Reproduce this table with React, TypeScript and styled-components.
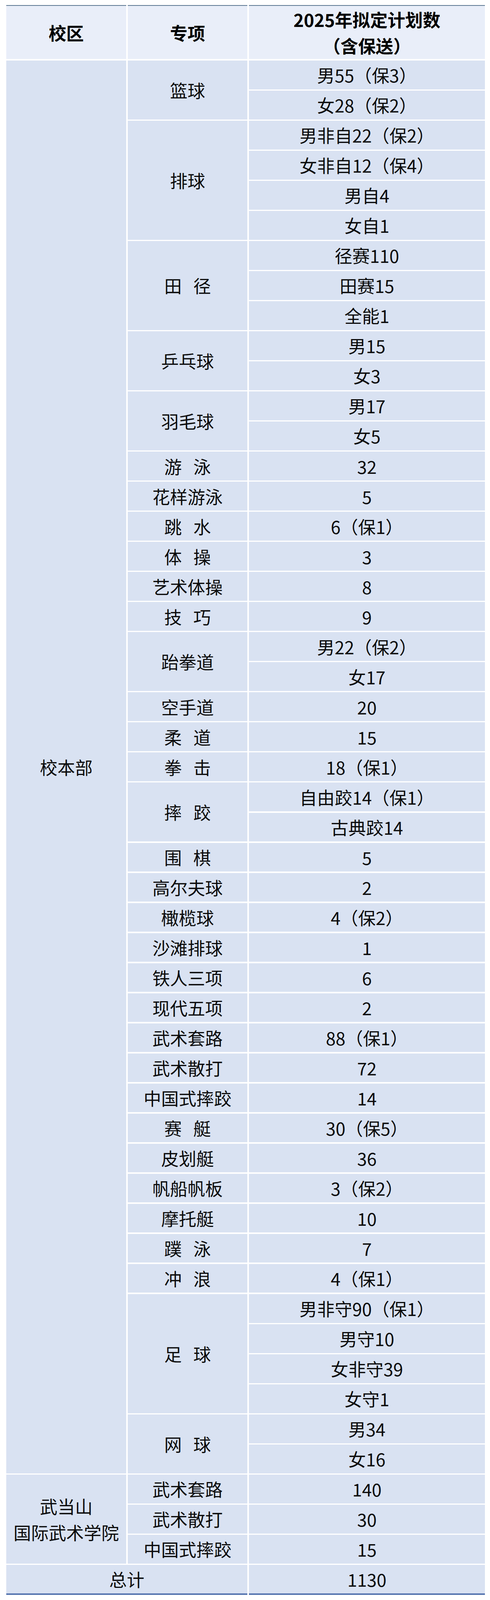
import React from "react";
import styled, { createGlobalStyle } from "styled-components";

const GlobalStyle = createGlobalStyle`
  html, body {
    margin: 0;
    padding: 0;
    background: #ffffff;
  }
  body {
    font-family: "Noto Sans CJK SC", "Noto Sans", sans-serif;
    color: #0b0b0b;
  }
`;

type Sport = {
  name: string;
  counts: string[];
};

const mainCampus: Sport[] = [
  { name: "篮球", counts: ["男55（保3）", "女28（保2）"] },
  { name: "排球", counts: ["男非自22（保2）", "女非自12（保4）", "男自4", "女自1"] },
  { name: "田 径", counts: ["径赛110", "田赛15", "全能1"] },
  { name: "乒乓球", counts: ["男15", "女3"] },
  { name: "羽毛球", counts: ["男17", "女5"] },
  { name: "游 泳", counts: ["32"] },
  { name: "花样游泳", counts: ["5"] },
  { name: "跳 水", counts: ["6（保1）"] },
  { name: "体 操", counts: ["3"] },
  { name: "艺术体操", counts: ["8"] },
  { name: "技 巧", counts: ["9"] },
  { name: "跆拳道", counts: ["男22（保2）", "女17"] },
  { name: "空手道", counts: ["20"] },
  { name: "柔 道", counts: ["15"] },
  { name: "拳 击", counts: ["18（保1）"] },
  { name: "摔 跤", counts: ["自由跤14（保1）", "古典跤14"] },
  { name: "围 棋", counts: ["5"] },
  { name: "高尔夫球", counts: ["2"] },
  { name: "橄榄球", counts: ["4（保2）"] },
  { name: "沙滩排球", counts: ["1"] },
  { name: "铁人三项", counts: ["6"] },
  { name: "现代五项", counts: ["2"] },
  { name: "武术套路", counts: ["88（保1）"] },
  { name: "武术散打", counts: ["72"] },
  { name: "中国式摔跤", counts: ["14"] },
  { name: "赛 艇", counts: ["30（保5）"] },
  { name: "皮划艇", counts: ["36"] },
  { name: "帆船帆板", counts: ["3（保2）"] },
  { name: "摩托艇", counts: ["10"] },
  { name: "蹼 泳", counts: ["7"] },
  { name: "冲 浪", counts: ["4（保1）"] },
  { name: "足 球", counts: ["男非守90（保1）", "男守10", "女非守39", "女守1"] },
  { name: "网 球", counts: ["男34", "女16"] },
];

const wudang: Sport[] = [
  { name: "武术套路", counts: ["140"] },
  { name: "武术散打", counts: ["30"] },
  { name: "中国式摔跤", counts: ["15"] },
];

const rowsOf = (list: Sport[]) =>
  list.reduce((sum, s) => sum + s.counts.length, 0);

// the reference page is 4786px tall; rows are laid out as fractions of that
const Page = styled.div`
  box-sizing: border-box;
  height: 100vh;
  display: flex;
  flex-direction: column;
  padding: calc(100vh * 15 / 4786) 13px calc(100vh * 15 / 4786) 16px;
`;

const Table = styled.div`
  flex: 1;
  min-height: 0;
  display: grid;
  grid-template-columns: 307px 306px 604px;
  grid-template-rows: 162fr repeat(50, 86fr) 90fr;
  column-gap: 4px;
  row-gap: calc(100vh * 4 / 4786);
`;

const Cell = styled.div`
  display: flex;
  flex-direction: column;
  align-items: center;
  justify-content: center;
  text-align: center;
  background: #d9e2f2;
  font-size: 45px;
  line-height: 67px;
  box-sizing: border-box;
  min-height: 0;
  overflow: hidden;
`;

const HeadCell = styled(Cell)`
  background: #e9eef9;
  border-top: 2px solid #5d7892;
  font-weight: 700;
  color: #000;
`;

const CampusCell = styled(Cell)<{ $rows: number }>`
  grid-column: 1;
  grid-row: span ${(p) => p.$rows};
`;

const SportCell = styled(Cell)<{ $rows: number }>`
  grid-column: 2;
  grid-row: span ${(p) => p.$rows};
  flex-direction: row;
`;

const CountCell = styled(Cell)`
  grid-column: 3;
`;

const TotalLabel = styled(Cell)`
  grid-column: 1 / span 2;
  border-bottom: 4px solid #5877b1;
`;

const TotalCount = styled(Cell)`
  grid-column: 3;
  border-bottom: 4px solid #5877b1;
`;

const Gap = styled.span`
  display: inline-block;
  width: 0.65em;
`;

const SportName = ({ name }: { name: string }) => {
  const parts = name.split(" ");
  return (
    <>
      {parts.map((part, i) => (
        <React.Fragment key={i}>
          {i > 0 && <Gap />}
          <span>{part}</span>
        </React.Fragment>
      ))}
    </>
  );
};

const SportRows = ({ list }: { list: Sport[] }) => (
  <>
    {list.map((sport) => (
      <React.Fragment key={sport.name}>
        <SportCell $rows={sport.counts.length}>
          <SportName name={sport.name} />
        </SportCell>
        {sport.counts.map((c, i) => (
          <CountCell key={i}>{c}</CountCell>
        ))}
      </React.Fragment>
    ))}
  </>
);

export default function App() {
  return (
    <Page>
      <GlobalStyle />
      <Table>
        <HeadCell>校区</HeadCell>
        <HeadCell>专项</HeadCell>
        <HeadCell>
          <span>2025年拟定计划数</span>
          <span>（含保送）</span>
        </HeadCell>

        <CampusCell $rows={rowsOf(mainCampus)}>校本部</CampusCell>
        <SportRows list={mainCampus} />

        <CampusCell $rows={rowsOf(wudang)}>
          <span>武当山</span>
          <span>国际武术学院</span>
        </CampusCell>
        <SportRows list={wudang} />

        <TotalLabel>总计</TotalLabel>
        <TotalCount>1130</TotalCount>
      </Table>
    </Page>
  );
}
